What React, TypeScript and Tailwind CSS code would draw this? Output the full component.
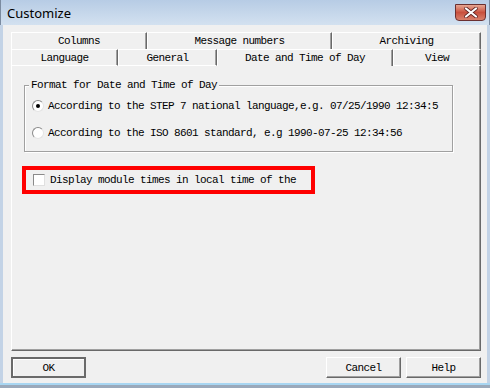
import clsx from 'clsx';

const backRow = [
  { label: 'Columns', w: 'w-[136px]' },
  { label: 'Message numbers', w: 'w-[185px]' },
  { label: 'Archiving', w: 'w-[149px]' },
];

const frontRow = [
  { label: 'Language', w: 'w-[107px]' },
  { label: 'General', w: 'w-[99px]' },
  { label: 'Date and Time of Day', w: 'w-[176px]', selected: true },
  { label: 'View', w: 'w-[88px]' },
];

function Tab({ label, w, selected, front }: { label: string; w: string; selected?: boolean; front?: boolean }) {
  return (
    <div
      className={clsx(
        'flex h-[17px] items-center justify-center border-t border-l border-r border-t-white border-l-white border-r-[#696969] bg-[#f0f0f0] shadow-[inset_-1px_0_0_#a0a0a0]',
        front && !selected && 'border-b border-b-white',
        w
      )}
    >
      {label}
    </div>
  );
}

function Radio({ checked }: { checked?: boolean }) {
  return (
    <span className="flex h-[12px] w-[12px] items-center justify-center rounded-full border border-t-[#8a8a8a] border-l-[#8a8a8a] border-r-[#e4e4e4] border-b-[#e4e4e4] bg-white">
      {checked && <span className="h-[4px] w-[4px] rounded-full bg-black" />}
    </span>
  );
}

function Button({ label, w, isDefault }: { label: string; w: string; isDefault?: boolean }) {
  return (
    <div
      className={clsx(
        'flex h-[21px] items-center justify-center bg-[#f0f0f0]',
        isDefault
          ? 'border-2 border-[#6a6a6a] shadow-[inset_1px_1px_0_#ffffff]'
          : 'border border-t-white border-l-white border-r-[#696969] border-b-[#696969] shadow-[inset_-1px_-1px_0_#a0a0a0]',
        w
      )}
    >
      {label}
    </div>
  );
}

export default function App() {
  return (
    <div className="flex h-[388px] w-[490px] flex-col bg-[#f0f0f0] font-['Liberation_Mono',monospace] text-[11px] leading-[12px] tracking-[-0.6px] text-black">
      {/* Title bar */}
      <div className="flex h-[25px] items-center justify-between border-l border-r border-[#7b8ba0] bg-gradient-to-b from-[#b7cce5] to-[#d3e1f0] pl-[6px] pr-[3px]">
        <span className="font-['Noto_Sans',sans-serif] text-[13px] leading-[16px] tracking-normal text-black">Customize</span>
        <div className="mb-[4px] flex h-[17px] w-[31px] items-center justify-center self-end rounded-b-[4px] border border-[#6b3030] bg-gradient-to-b from-[#e6a592] via-[#c8503e] to-[#d8806c]">
          <svg width="14" height="11" viewBox="0 0 14 11">
            <path d="M2 1.5 L12 9.5 M12 1.5 L2 9.5" stroke="#5a2020" strokeWidth="3.6" strokeLinecap="round" />
            <path d="M2 1.5 L12 9.5 M12 1.5 L2 9.5" stroke="#ffffff" strokeWidth="2.2" strokeLinecap="round" />
          </svg>
        </div>
      </div>

      {/* Client */}
      <div className="flex flex-1 flex-col border-l-[3px] border-r-[3px] border-[#c3d3e6] pl-[8px] pr-[6px] pt-[7px]">
        <div className="flex">
          {backRow.map((t) => (
            <Tab key={t.label} {...t} />
          ))}
        </div>
        <div className="flex">
          {frontRow.map((t) => (
            <Tab key={t.label} front {...t} />
          ))}
        </div>

        {/* Tab panel */}
        <div className="flex h-[285px] flex-col border-l border-r border-b border-l-white border-r-[#696969] border-b-[#696969] pl-[10px] pt-[13px] shadow-[inset_-1px_-1px_0_#a0a0a0]">
          <fieldset className="ml-[2px] w-[429px] border border-[#a0a0a0] pb-[11px] pl-[7px] shadow-[1px_1px_0_#ffffff,inset_1px_1px_0_#ffffff]">
            <legend className="ml-[-3px] bg-[#f0f0f0] px-[2px]">Format for Date and Time of Day</legend>
            <div className="mt-[8px] flex h-[14px] items-center gap-[4px]">
              <Radio checked />
              <span>According to the STEP 7 national language,e.g. 07/25/1990 12:34:5</span>
            </div>
            <div className="mt-[13px] flex h-[14px] items-center gap-[4px]">
              <Radio />
              <span>According to the ISO 8601 standard, e.g 1990-07-25 12:34:56</span>
            </div>
          </fieldset>

          <div className="mt-[14px] flex h-[28px] w-[293px] items-center gap-[5px] border-4 border-[#ff0000] pl-[7px]">
            <span className="h-[12px] w-[12px] border border-t-[#8a8a8a] border-l-[#8a8a8a] border-r-[#e0e0e0] border-b-[#e0e0e0] bg-white" />
            <span>Display module times in local time of the</span>
          </div>
        </div>

        {/* Buttons */}
        <div className="mt-[6px] flex items-center">
          <Button label="OK" w="w-[75px]" isDefault />
          <div className="flex-1" />
          <Button label="Cancel" w="w-[75px]" />
          <div className="w-[5px]" />
          <Button label="Help" w="w-[75px]" />
        </div>
      </div>

      {/* Bottom frame */}
      <div className="h-[5px] border-t-2 border-t-[#a8d6f2] bg-[#9aa9bb]" />
    </div>
  );
}
